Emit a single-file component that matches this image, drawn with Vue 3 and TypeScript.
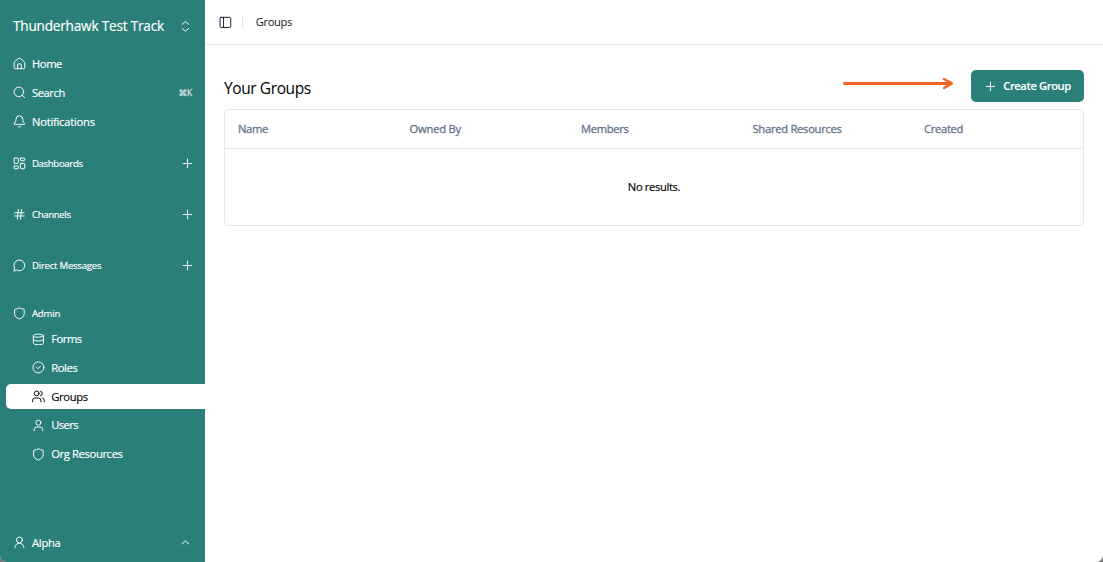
<script setup lang="ts">
interface Item {
  label: string
  icon: string
  spacing: number
  hint?: string
}

const icons: Record<string, string> = {
  home: '<path d="M15.500 22v-8a1 1 0 0 0-1-1h-5a1 1 0 0 0-1 1v8"/><path d="M2 10.500a2 2 0 0 1 .709-1.528l8-6.500a2 2 0 0 1 2.582 0l8 6.500A2 2 0 0 1 22 10.500v9.500a2 2 0 0 1-2 2H4a2 2 0 0 1-2-2z"/>',
  search: '<circle cx="11" cy="11" r="9"/><path d="m22 22-4.800-4.800"/>',
  bell: '<path d="M9.800 21.500a2.500 2.500 0 0 0 4.400 0"/><path d="M2.500 15.500A1 1 0 0 0 3.200 17.500h17.600a1 1 0 0 0 .74-1.900C19.700 13.900 18.500 12.500 18.500 8A6.500 6.500 0 0 0 5.500 8c0 4.500-1.200 5.900-3 7.500"/>',
  dashboard: '<rect width="8" height="10" x="2" y="2" rx="1"/><rect width="8" height="5" x="14" y="2" rx="1"/><rect width="8" height="10" x="14" y="12" rx="1"/><rect width="8" height="5" x="2" y="17" rx="1"/>',
  hash: '<path d="M3 9h18M3 15h18M10 3 8 21M16 3l-2 18"/>',
  message: '<path d="M6.900 21A10.200 10.200 0 1 0 3 17L2 22Z"/>',
  shield: '<path d="M21 13c0 5-4 7.500-8.660 9.450a1 1 0 0 1-.67-.01C7 20.500 3 18 3 13V5a1 1 0 0 1 1-1c3 0 5.500-1 7.240-2.320a1.170 1.170 0 0 1 1.520 0C14.510 3 17 4 20 4a1 1 0 0 1 1 1z"/>',
  database: '<ellipse cx="12" cy="5" rx="9.500" ry="3"/><path d="M2.500 5v14a9.500 3 0 0 0 19 0V5"/><path d="M2.500 12a9.500 3 0 0 0 19 0"/>',
  check: '<circle cx="12" cy="12" r="10.300"/><path d="m8.500 12 2.500 2.500 4.500-4.500"/>',
  users: '<path d="M16.500 22v-2.500a4.500 4.500 0 0 0-4.500-4.500H5.500a4.500 4.500 0 0 0-4.500 4.500V22"/><circle cx="8.800" cy="6.500" r="4.500"/><path d="M23 22v-2.500a4.500 4.500 0 0 0-3.200-4.300M16 2.200a4.500 4.500 0 0 1 0 8.700"/>',
  member: '<circle cx="12" cy="7" r="4.700"/><path d="M20 22v-2a5 5 0 0 0-5-5H9a5 5 0 0 0-5 5v2"/>',
  user: '<circle cx="12" cy="7.500" r="5.500"/><path d="M20.500 22a8.500 8.500 0 0 0-17 0"/>',
  plus: '<path d="M4 12h16M12 4v16"/>',
  updown: '<path d="m6 16 6 5 6-5M6 8l6-5 6 5"/>',
  up: '<path d="m18.500 15-6.500-6-6.500 6"/>',
  panel: '<rect width="20" height="19" x="2" y="2.500" rx="2"/><path d="M8.500 2.500v19"/>',
}

const mainItems: Item[] = [
  { label: 'Home', icon: 'home', spacing: -0.4 },
  { label: 'Search', icon: 'search', spacing: -0.43, hint: '⌘K' },
  { label: 'Notifications', icon: 'bell', spacing: -0.24 },
]
const sections: Item[] = [
  { label: 'Dashboards', icon: 'dashboard', spacing: -0.34 },
  { label: 'Channels', icon: 'hash', spacing: -0.34 },
  { label: 'Direct Messages', icon: 'message', spacing: -0.24 },
]
const adminItems: Item[] = [
  { label: 'Forms', icon: 'database', spacing: -0.45 },
  { label: 'Roles', icon: 'check', spacing: -0.35 },
  { label: 'Groups', icon: 'users', spacing: -0.3 },
  { label: 'Users', icon: 'member', spacing: -0.6 },
  { label: 'Org Resources', icon: 'shield', spacing: -0.35 },
]
const columns = [
  { label: 'Name', spacing: -0.3 },
  { label: 'Owned By', spacing: -0.2 },
  { label: 'Members', spacing: -0.3 },
  { label: 'Shared Resources', spacing: -0.27 },
  { label: 'Created', spacing: -0.3 },
]
</script>

<template>
  <div class="window">
    <aside class="sidebar">
      <div class="org">
        <span class="org-name">Thunderhawk Test Track</span>
        <svg class="icon" viewBox="0 0 24 24" v-html="icons.updown" />
      </div>
      <nav class="main-nav">
        <a v-for="i in mainItems" :key="i.label" class="row">
          <svg class="icon" viewBox="0 0 24 24" v-html="icons[i.icon]" />
          <span :style="{ letterSpacing: i.spacing + 'px' }">{{ i.label }}</span>
          <kbd v-if="i.hint">{{ i.hint }}</kbd>
        </a>
      </nav>
      <div class="sections">
        <div v-for="i in sections" :key="i.label" class="section">
          <svg class="icon" viewBox="0 0 24 24" v-html="icons[i.icon]" />
          <span :style="{ letterSpacing: i.spacing + 'px' }">{{ i.label }}</span>
          <svg class="icon add" viewBox="0 0 24 24" v-html="icons.plus" />
        </div>
      </div>
      <div class="section admin">
        <svg class="icon" viewBox="0 0 24 24" v-html="icons.shield" />
        <span class="admin-label">Admin</span>
      </div>
      <nav class="admin-nav">
        <a v-for="i in adminItems" :key="i.label" class="row sub" :class="{ active: i.label === 'Groups' }">
          <svg class="icon" viewBox="0 0 24 24" v-html="icons[i.icon]" />
          <span :style="{ letterSpacing: i.spacing + 'px' }">{{ i.label }}</span>
        </a>
      </nav>
      <div class="row account">
        <svg class="icon" viewBox="0 0 24 24" v-html="icons.user" />
        <span class="account-name">Alpha</span>
        <svg class="icon caret" viewBox="0 0 24 24" v-html="icons.up" />
      </div>
    </aside>
    <main class="content">
      <header class="topbar">
        <svg class="icon" viewBox="0 0 24 24" v-html="icons.panel" />
        <i class="divider"></i>
        <span class="crumb">Groups</span>
      </header>
      <section class="page">
        <div class="heading">
          <h1>Your Groups</h1>
          <svg class="arrow" viewBox="0 0 112 14">
            <path d="M1.500 6.500H108" stroke-width="2.800" />
            <path d="M101 2 109 6.500 101 11" stroke-width="2.400" />
          </svg>
          <button class="create">
            <svg class="icon" viewBox="0 0 24 24" v-html="icons.plus" />
            <span>Create Group</span>
          </button>
        </div>
        <div class="table">
          <div class="thead">
            <span v-for="c in columns" :key="c.label" :style="{ letterSpacing: c.spacing + 'px' }">{{ c.label }}</span>
          </div>
          <div class="empty"><span>No results.</span></div>
        </div>
      </section>
    </main>
  </div>
</template>

<style>
body { margin: 0; background: #77787b; }
</style>

<style scoped>
* { box-sizing: border-box; }
.window {
  display: flex;
  width: 1103px;
  height: 562px;
  overflow: hidden;
  border-radius: 0 0 7px 7px;
  background: #fff;
  font: 11.2px/16px "Open Sans", "Noto Sans", sans-serif;
  color: #000;
  white-space: nowrap;
  -webkit-text-stroke: 0.15px currentColor;
}
.icon {
  width: 12.8px;
  height: 12.8px;
  flex: none;
  fill: none;
  stroke: currentColor;
  stroke-width: 1.8;
  stroke-linecap: round;
  stroke-linejoin: round;
}
.sidebar {
  display: flex;
  flex-direction: column;
  flex: none;
  width: 205px;
  height: 562px;
  background: #2a8079;
  color: #fff;
}
.org {
  display: flex;
  align-items: center;
  justify-content: space-between;
  height: 51px;
  padding: 1px 13.600px 0 13px;
}
.org-name { font-size: 13.600px; letter-spacing: -0.2px; }
.main-nav { display: flex; flex-direction: column; gap: 3.400px; }
.row {
  display: flex;
  align-items: center;
  flex: none;
  gap: 6.400px;
  height: 25.600px;
  padding: 0 12.800px;
}
kbd { margin-left: auto; font: 8.500px "Open Sans", "DejaVu Sans", sans-serif; opacity: .75; -webkit-text-stroke-width: 0.3px; }
.sections { display: flex; flex-direction: column; gap: 25.400px; margin-top: 16.200px; }
.section {
  display: flex;
  align-items: center;
  flex: none;
  gap: 6.400px;
  height: 25.600px;
  padding: 0 11px 0 12.800px;
  font-size: 9.600px;
}
.section .add { width: 13px; height: 13px; margin-left: auto; }
.admin { margin-top: 22.400px; }
.admin-label { letter-spacing: -0.2px; }
.admin-nav { display: flex; flex-direction: column; gap: 3.200px; }
.sub { margin-left: 6px; padding-left: 26px; }
.active { background: #fff; color: #000; border-radius: 5px 0 0 5px; }
.account { margin-top: auto; margin-bottom: 6.500px; }
.account-name { letter-spacing: -0.25px; }
.caret { margin-left: auto; }
.content { flex: 1; min-width: 0; }
.topbar {
  display: flex;
  align-items: center;
  height: 45px;
  padding-left: 14px;
  border-bottom: 1px solid #e2e8f0;
  color: #0f172a;
}
.divider { width: 1px; height: 12px; margin: 0 13px 0 10px; background: #e2e8f0; }
.crumb { letter-spacing: -0.4px; -webkit-text-stroke-width: 0; }
.page { padding: 25px 19px 0; }
.heading { display: flex; align-items: center; height: 32px; margin-bottom: 7px; }
h1 { margin: 3px auto 0 0; font-size: 15.500px; line-height: 22px; font-weight: 400; letter-spacing: -0.4px; -webkit-text-stroke-width: 0; }
.arrow {
  width: 112px;
  height: 14px;
  margin: -4px 16.500px 0 0;
  fill: none;
  stroke: #f26322;
  stroke-linecap: round;
  stroke-linejoin: round;
}
.create {
  display: flex;
  align-items: center;
  gap: 6.400px;
  width: 113px;
  height: 32px;
  padding: 0 0 0 13px;
  border: 0;
  border-radius: 5px;
  background: #2a8079;
  color: #fff;
  font: 600 11.200px/16px "Open Sans", "Noto Sans", sans-serif;
  letter-spacing: -0.4px;
  -webkit-text-stroke-width: 0.1px;
}
.table { height: 117px; border: 1px solid #e2e8f0; border-radius: 5px; }
.thead {
  display: grid;
  grid-template-columns: repeat(5, 171.500px);
  align-items: center;
  height: 39px;
  padding-left: 13px;
  border-bottom: 1px solid #e2e8f0;
  color: #64748b;
  font-weight: 500;
  -webkit-text-stroke-width: 0.3px;
}
.empty { display: flex; align-items: center; justify-content: center; height: 76px; letter-spacing: -0.35px; }
</style>
